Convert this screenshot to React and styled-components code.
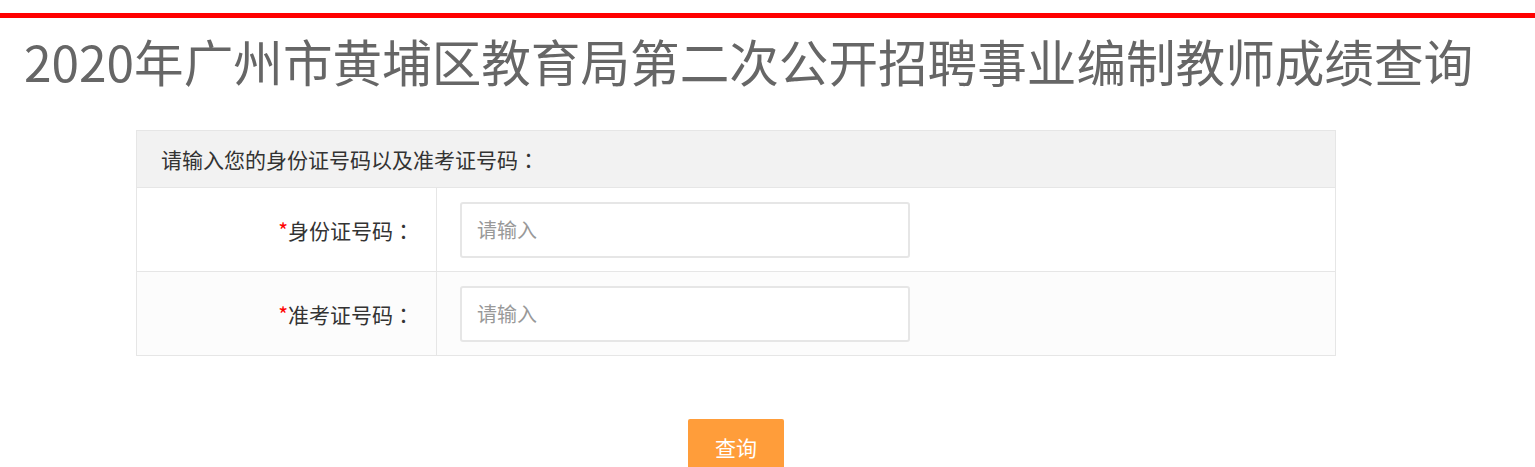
import styled, { createGlobalStyle } from "styled-components"

const GlobalStyle = createGlobalStyle`
    html, body {
        margin: 0;
        padding: 0;
        background: #ffffff;
        font-family: "Microsoft YaHei", "Noto Sans CJK SC", "Noto Sans", sans-serif;
    }
`

const Page = styled.div`
    display: block;
    width: 100%;
    padding-top: 13px;
`

const TopBar = styled.div`
    height: 5px;
    background: #ff0000;
`

const Title = styled.h1`
    margin: 0;
    padding: 0 0 0 24px;
    font-size: 49.6px;
    line-height: 84px;
    font-weight: 400;
    color: #666666;
    white-space: nowrap;
`

const Container = styled.div`
    width: 1200px;
    margin: 28px 0 0 136px;
`

const Table = styled.div`
    border: 1px solid #e6e6e6;
    border-bottom: 0;
`

const Colon = styled.span`
    font-family: "Noto Sans CJK TC", "Noto Sans CJK SC", sans-serif;
`

const Header = styled.div`
    height: 56px;
    line-height: 56px;
    padding-left: 24px;
    background: #f2f2f2;
    border-bottom: 1px solid #e6e6e6;
    font-size: 21px;
    color: #333333;
`

const Row = styled.div`
    display: grid;
    grid-template-columns: 300px 1fr;
    height: 83px;
    border-bottom: 1px solid #e6e6e6;
    background: ${props => props.$striped ? "#fcfcfc" : "#ffffff"};
`

const Label = styled.div`
    display: flex;
    align-items: center;
    justify-content: flex-end;
    padding-right: 22px;
    border-right: 1px solid #e6e6e6;
    font-size: 21px;
    color: #333333;

    .req {
        color: #ff0000;
    }
`

const Field = styled.div`
    display: flex;
    align-items: center;
    padding-left: 23px;
`

const Input = styled.input`
    box-sizing: border-box;
    width: 450px;
    height: 56px;
    padding: 0 15px;
    border: 2px solid #e6e6e6;
    border-radius: 3px;
    background: #ffffff;
    font-family: inherit;
    font-size: 20px;
    color: #333333;
    outline: none;

    &::placeholder {
        color: #999999;
    }
`

const Actions = styled.div`
    display: flex;
    justify-content: center;
    padding-top: 63px;
`

const Button = styled.button`
    width: 96px;
    height: 56px;
    border: 0;
    border-radius: 2px;
    background: #ff9d3a;
    color: #ffffff;
    font-family: inherit;
    font-size: 21px;
    cursor: pointer;
`

const fields = [
    { label: "身份证号码" },
    { label: "准考证号码" }
]

const App = () => {
    return (
        <Page>
            <GlobalStyle/>
            <TopBar/>
            <Title>2020年广州市黄埔区教育局第二次公开招聘事业编制教师成绩查询</Title>
            <Container>
                <Table>
                    <Header>请输入您的身份证号码以及准考证号码<Colon>：</Colon></Header>
                    {
                        fields.map((field, i) => (
                            <Row key={field.label} $striped={i % 2 === 1}>
                                <Label><span className="req">*</span>{field.label}<Colon>：</Colon></Label>
                                <Field><Input type="text" placeholder="请输入"/></Field>
                            </Row>
                        ))
                    }
                </Table>
                <Actions>
                    <Button type="button">查询</Button>
                </Actions>
            </Container>
        </Page>
    )
}

export default App
